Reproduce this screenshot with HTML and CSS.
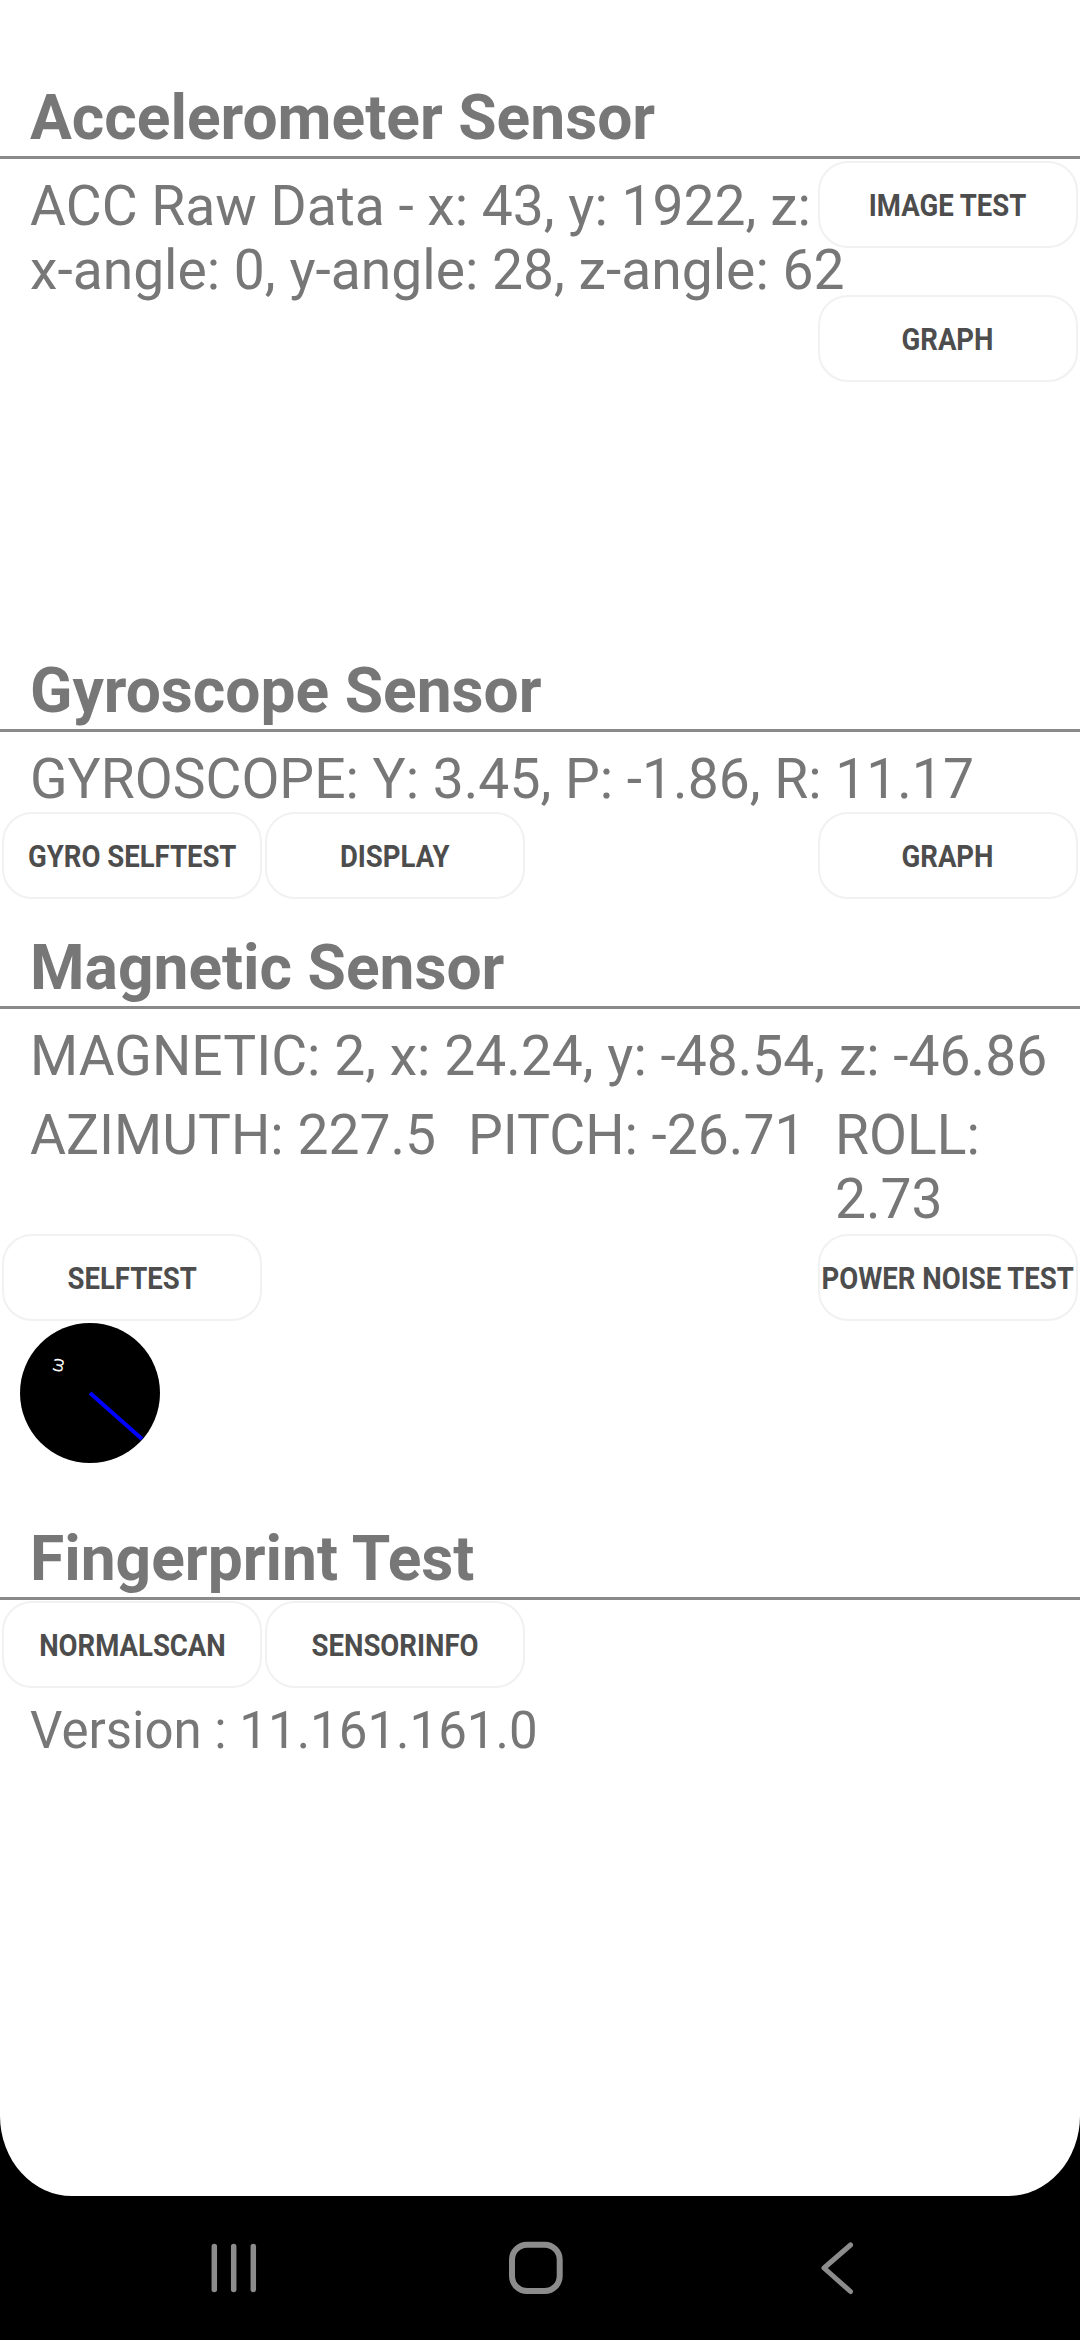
FILE: index.html
```html
<!DOCTYPE html>
<html lang="en">
<head>
<meta charset="utf-8">
<title>Sensor Test</title>
<link rel="stylesheet" href="styles.css">
</head>
<body>
<div class="screen">
  <main class="panel">
    <section class="sec sec-accel">
      <h2 class="title">Accelerometer Sensor</h2>
      <div class="rule"></div>
      <div class="accel-body">
        <p class="val nowrap">ACC Raw Data - x: 43, y: 1922, z:</p>
        <p class="val val-tight nowrap">x-angle: 0, y-angle: 28, z-angle: 62</p>
        <div class="side-btns">
          <button class="btn"><span class="lbl">IMAGE TEST</span></button>
          <button class="btn"><span class="lbl">GRAPH</span></button>
        </div>
      </div>
    </section>

    <section class="sec sec-gyro">
      <h2 class="title">Gyroscope Sensor</h2>
      <div class="rule"></div>
      <p class="val nowrap">GYROSCOPE: Y: 3.45, P: -1.86, R: 11.17</p>
      <div class="btn-row btn-row-gyro">
        <button class="btn"><span class="lbl">GYRO SELFTEST</span></button>
        <button class="btn"><span class="lbl">DISPLAY</span></button>
        <button class="btn btn-end"><span class="lbl">GRAPH</span></button>
      </div>
    </section>

    <section class="sec sec-mag">
      <h2 class="title">Magnetic Sensor</h2>
      <div class="rule"></div>
      <p class="val nowrap">MAGNETIC: 2, x: 24.24, y: -48.54, z: -46.86</p>
      <div class="orient">
        <p class="val col col-az">AZIMUTH: 227.5</p>
        <p class="val col col-pitch">PITCH: -26.71</p>
        <p class="val col col-roll">ROLL: 2.73</p>
      </div>
      <div class="btn-row btn-row-mag">
        <button class="btn"><span class="lbl">SELFTEST</span></button>
        <button class="btn btn-end"><span class="lbl">POWER NOISE TEST</span></button>
      </div>
      <div class="compass">
        <svg width="140" height="140" viewBox="0 0 140 140">
          <circle cx="70" cy="70" r="70" fill="#000"/>
          <line x1="70" y1="70" x2="122" y2="116" stroke="#0000ff" stroke-width="4"/>
          <text x="0" y="5" fill="#fff" font-family="Roboto, sans-serif" font-size="18" text-anchor="middle" transform="translate(38 42) rotate(-80)">ω</text>
        </svg>
      </div>
    </section>

    <section class="sec sec-finger">
      <h2 class="title">Fingerprint Test</h2>
      <div class="rule"></div>
      <div class="btn-row btn-row-finger">
        <button class="btn"><span class="lbl">NORMALSCAN</span></button>
        <button class="btn"><span class="lbl">SENSORINFO</span></button>
      </div>
      <p class="val val-version">Version : 11.161.161.0</p>
    </section>
  </main>

  <nav class="navbar">
    <span class="nav-icon">
      <svg width="100" height="100" viewBox="0 0 100 100">
        <g stroke="#8c8c8c" stroke-width="5.5" stroke-linecap="round" fill="none">
          <line x1="30.3" y1="28.5" x2="30.3" y2="71.5"/>
          <line x1="49.7" y1="28.5" x2="49.7" y2="71.5"/>
          <line x1="69.3" y1="28.5" x2="69.3" y2="71.5"/>
        </g>
      </svg>
    </span>
    <span class="nav-icon">
      <svg width="100" height="100" viewBox="0 0 100 100">
        <rect x="26" y="26.8" width="47.7" height="46.3" rx="15" ry="15" fill="none" stroke="#8c8c8c" stroke-width="6"/>
      </svg>
    </span>
    <span class="nav-icon">
      <svg width="100" height="100" viewBox="0 0 100 100">
        <polyline points="62.5,27 36,50 62.5,73.5" fill="none" stroke="#8c8c8c" stroke-width="5" stroke-linecap="round" stroke-linejoin="round"/>
      </svg>
    </span>
  </nav>
</div>
</body>
</html>
```

FILE: styles.css
```css
* {
  box-sizing: border-box;
}

html, body {
  margin: 0;
  padding: 0;
  background: #000;
}

.screen {
  width: 1080px;
  height: 2340px;
  display: flex;
  flex-direction: column;
  background: #000;
  font-family: Roboto, "Noto Sans", sans-serif;
}

.panel {
  height: 2196px;
  flex: none;
  background: #fff;
  border-radius: 0 0 72px 72px / 0 0 80px 80px;
  padding-top: 81px;
  overflow: hidden;
}

.sec {
  margin: 0;
}

.title {
  margin: 0 0 2px;
  padding-left: 30px;
  font-size: 62.3px;
  line-height: 73px;
  height: 73px;
  font-weight: 700;
  color: #777777;
  white-space: nowrap;
}

.rule {
  height: 3px;
  background: #8a8a8a;
}

.val {
  margin: 15px 0 0;
  padding-left: 30px;
  font-size: 55.2px;
  line-height: 64px;
  font-weight: 400;
  color: #777777;
}

.nowrap {
  white-space: nowrap;
}

.val-tight {
  margin-top: 0;
}

.accel-body {
  position: relative;
  display: flow-root;
  height: 495px;
}

.side-btns {
  position: absolute;
  top: 2px;
  right: 2px;
  display: flex;
  flex-direction: column;
  gap: 47px;
}

.btn {
  width: 260px;
  height: 87px;
  margin: 0;
  padding: 0;
  background: #fff;
  border: 2px solid #f1f1f1;
  border-radius: 30px;
  font-family: Roboto, "Noto Sans", sans-serif;
  font-weight: 700;
  font-size: 32px;
  color: #4d4d4d;
  white-space: nowrap;
  display: flex;
  align-items: center;
  justify-content: center;
  overflow: visible;
}

.lbl {
  display: inline-block;
  transform: scaleX(0.86);
  transform-origin: center;
}

.btn-row {
  display: flex;
  gap: 3px;
  padding: 0 2px;
}

.btn-end {
  margin-left: auto;
}

.btn-row-gyro {
  margin-top: 1px;
}

.sec-gyro {
  margin-bottom: 32px;
}

.orient {
  display: flex;
  margin-top: 15px;
}

.orient .col {
  margin: 0;
}

.col-az {
  flex: 0 0 468px;
}

.col-pitch {
  flex: 0 0 367px;
  padding-left: 0;
}

.col-roll {
  flex: 1 1 auto;
  min-width: 0;
  padding-left: 0;
  padding-right: 20px;
}

.btn-row-mag {
  margin-top: 3px;
}

.compass {
  margin: 2px 0 0 20px;
  width: 140px;
  height: 140px;
}

.compass svg {
  display: block;
}

.sec-mag {
  margin-bottom: 59px;
}

.btn-row-finger {
  margin-top: 1px;
}

.val-version {
  margin-top: 11px;
  font-size: 51px;
}

.navbar {
  flex: 1;
  display: flex;
  align-items: center;
  justify-content: center;
  gap: 202px;
  padding-right: 9px;
}

.nav-icon {
  width: 100px;
  height: 100px;
  display: block;
}

.nav-icon svg {
  display: block;
}
```
